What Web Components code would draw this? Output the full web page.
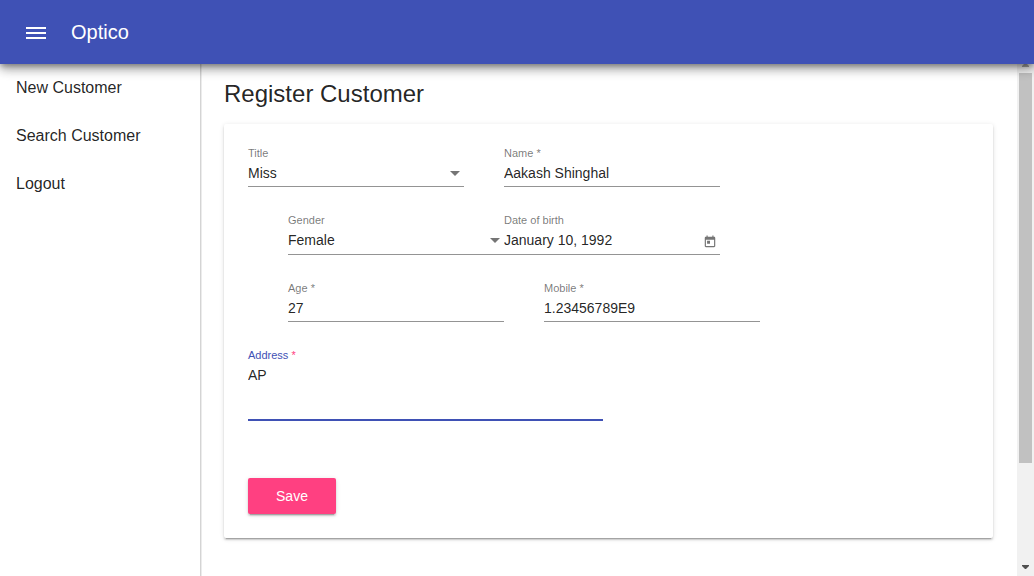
<!DOCTYPE html>
<html lang="en">
<head>
<meta charset="utf-8">
<meta name="viewport" content="width=device-width, initial-scale=1">
<title>Optico</title>
<style>
  body { margin: 0; font-family: "Liberation Sans", Arial, sans-serif; color: rgba(0,0,0,.87); background: #fff; }
</style>
</head>
<body>
<optico-app>
  <optico-toolbar slot="header">Optico</optico-toolbar>
  <nav-item slot="nav" href="#new">New Customer</nav-item>
  <nav-item slot="nav" href="#search">Search Customer</nav-item>
  <nav-item slot="nav" href="#logout">Logout</nav-item>
  <register-card heading="Register Customer">
    <form-row>
      <form-field kind="select" label="Title" value="Miss" options="Mr,Mrs,Miss"></form-field>
      <form-field label="Name" value="Aakash Shinghal" required></form-field>
    </form-row>
    <form-row inset joined>
      <form-field kind="select" label="Gender" value="Female" options="Male,Female"></form-field>
      <form-field kind="date" label="Date of birth" value="January 10, 1992"></form-field>
    </form-row>
    <form-row inset>
      <form-field label="Age" value="27" required></form-field>
      <form-field label="Mobile" value="1.23456789E9" required></form-field>
    </form-row>
    <form-row>
      <form-field kind="area" label="Address" value="AP" required active></form-field>
    </form-row>
    <save-button slot="actions">Save</save-button>
  </register-card>
</optico-app>

<script>
const define = (name, render) => customElements.define(name, class extends HTMLElement {
  connectedCallback() {
    if (this.shadowRoot) return;
    this.attachShadow({ mode: 'open' }).innerHTML = render(this);
  }
});

define('optico-toolbar', () => `
  <style>
    :host { display: block; position: relative; z-index: 2; background: #3f51b5; color: #fff;
      box-shadow: 0 3px 5px -1px rgba(0,0,0,.26), 0 6px 10px 0 rgba(0,0,0,.24), 0 1px 12px 0 rgba(0,0,0,.24); }
    header { display: flex; align-items: center; gap: 15px; height: 64px; padding: 0 16px; }
    button { display: grid; place-items: center; width: 40px; height: 40px; padding: 0; border: 0; background: none; color: inherit; }
    h1 { margin: 0; font-size: 20px; font-weight: 500; line-height: 32px; }
  </style>
  <header>
    <button type="button" aria-label="Menu">
      <svg width="24" height="24" viewBox="0 0 24 24" fill="currentColor"><path d="M2 7h20v2H2zM2 12h20v2H2zM2 17h20v2H2z"/></svg>
    </button>
    <h1><slot></slot></h1>
  </header>`);

define('nav-item', el => `
  <style>
    :host { display: block; }
    a { display: block; padding: 0 16px; font-size: 16px; line-height: 48px; color: inherit; text-decoration: none; }
  </style>
  <a href="${el.getAttribute('href')}"><slot></slot></a>`);

define('scroll-rail', () => `
  <style>
    :host { display: flex; flex-direction: column; flex: none; width: 17px; background: #f1f1f1; }
    svg { display: block; flex: none; }
    .thumb { flex: 65; margin: 0 2px; background: #c1c1c1; }
    .rest { flex: 16; }
  </style>
  <svg width="17" height="17" viewBox="0 0 17 17" fill="#a3a3a3"><path d="M5 11v-1l3-3h1l3 3v1z"/></svg>
  <div class="thumb"></div><div class="rest"></div>
  <svg width="17" height="17" viewBox="0 0 17 17" fill="#505050"><path d="M5 6h7v1l-3 3H8L5 7z"/></svg>`);

define('optico-app', () => `
  <style>
    :host { display: flex; flex-direction: column; height: 100vh; overflow: hidden; }
    .body { display: flex; flex: 1; min-height: 0; margin-top: -8px; }
    nav { flex: none; box-sizing: border-box; width: 200px; padding-top: 8px; box-shadow: 1px 0 0 #d4d4d4, 2px 0 0 #ececec; }
    main { flex: 1; min-width: 0; padding: 24px; overflow: auto; scrollbar-width: none; }
  </style>
  <slot name="header"></slot>
  <div class="body">
    <nav><slot name="nav"></slot></nav>
    <main><slot></slot></main>
    <scroll-rail aria-hidden="true"></scroll-rail>
  </div>`);

define('register-card', el => `
  <style>
    :host { display: block; }
    h2 { margin: 0 0 16px; font-size: 24px; font-weight: 400; line-height: 28px; }
    form { padding: 24px; border-radius: 2px; background: #fff;
      box-shadow: 0 3px 1px -2px rgba(0,0,0,.2), 0 2px 2px 0 rgba(0,0,0,.14), 0 1px 5px 0 rgba(0,0,0,.12); }
    .rows { display: flex; flex-direction: column; gap: 28px; margin-bottom: 57px; }
  </style>
  <h2>${el.getAttribute('heading')}</h2>
  <form>
    <div class="rows"><slot></slot></div>
    <slot name="actions"></slot>
  </form>`);

define('form-row', () => `
  <style>
    :host { display: flex; gap: 40px; }
    :host([inset]) { padding-left: 40px; }
    :host([joined]) { gap: 0; --line-gap: 3px; }
  </style>
  <slot></slot>`);

define('form-field', el => {
  const kind = el.getAttribute('kind') || 'text';
  const value = el.getAttribute('value');
  const control = {
    text: () => `<input id="control" type="text" value="${value}">`,
    date: () => `<input id="control" type="text" value="${value}">
      <button type="button" aria-label="Open calendar"><svg width="14" height="14" viewBox="0 0 24 24" fill="currentColor"><path d="M19 3h-1V1h-2v2H8V1H6v2H5c-1.110 0-1.990.9-1.990 2L3 19c0 1.100.89 2 2 2h14c1.100 0 2-.9 2-2V5c0-1.100-.9-2-2-2zm0 16H5V8h14v11zM7 10h5v5H7z"/></svg></button>`,
    select: () => `<select id="control">${el.getAttribute('options').split(',').map(o =>
      `<option${o === value ? ' selected' : ''}>${o}</option>`).join('')}</select>
      <svg class="arrow" width="10" height="5" viewBox="0 0 10 5" fill="currentColor"><path d="M0 0h10L5 5z"/></svg>`,
    area: () => `<textarea id="control">${value}</textarea>`
  }[kind]();
  return `
  <style>
    :host { display: block; flex: 0 1 216px; min-width: 0; }
    :host([kind="area"]) { flex-basis: 355px; }
    label { display: block; margin-bottom: 4px; font-size: 11px; line-height: 10px; white-space: nowrap; color: rgba(0,0,0,.54); }
    :host([active]) label { color: #3f51b5; }
    :host([active]) label span { color: #ff4081; }
    .line { display: flex; align-items: center; padding-bottom: var(--line-gap, 2px); border-bottom: 1px solid #949494; color: #757575; }
    :host([active]) .line { padding-bottom: 0; border-bottom: 2px solid #3f51b5; }
    input, select, textarea { display: block; flex: 1; min-width: 0; box-sizing: border-box; height: 22px; margin: 0; padding: 0; border: 0;
      outline: 0; background: none; appearance: none; font: 14px/22px "Liberation Sans", Arial, sans-serif; color: rgba(0,0,0,.87); }
    textarea { height: 55px; resize: none; }
    .arrow { flex: none; margin-right: 4px; pointer-events: none; }
    :host([kind="date"]) button { display: grid; place-items: center; box-sizing: border-box; width: 20px; height: 22px; padding: 4px 0 0; border: 0; background: none; color: inherit; }
  </style>
  <label for="control">${el.getAttribute('label')}${el.hasAttribute('required') ? ' <span>*</span>' : ''}</label>
  <div class="line">${control}</div>`;
});

define('save-button', () => `
  <style>
    :host { display: block; }
    button { display: block; min-width: 88px; padding: 0 16px; border: 0; border-radius: 2px; background: #ff4081; color: #fff;
      font: 500 14px/36px "Liberation Sans", Arial, sans-serif;
      box-shadow: 0 3px 1px -2px rgba(0,0,0,.2), 0 2px 2px 0 rgba(0,0,0,.14), 0 1px 5px 0 rgba(0,0,0,.12); }
  </style>
  <button type="button"><slot></slot></button>`);
</script>
</body>
</html>
